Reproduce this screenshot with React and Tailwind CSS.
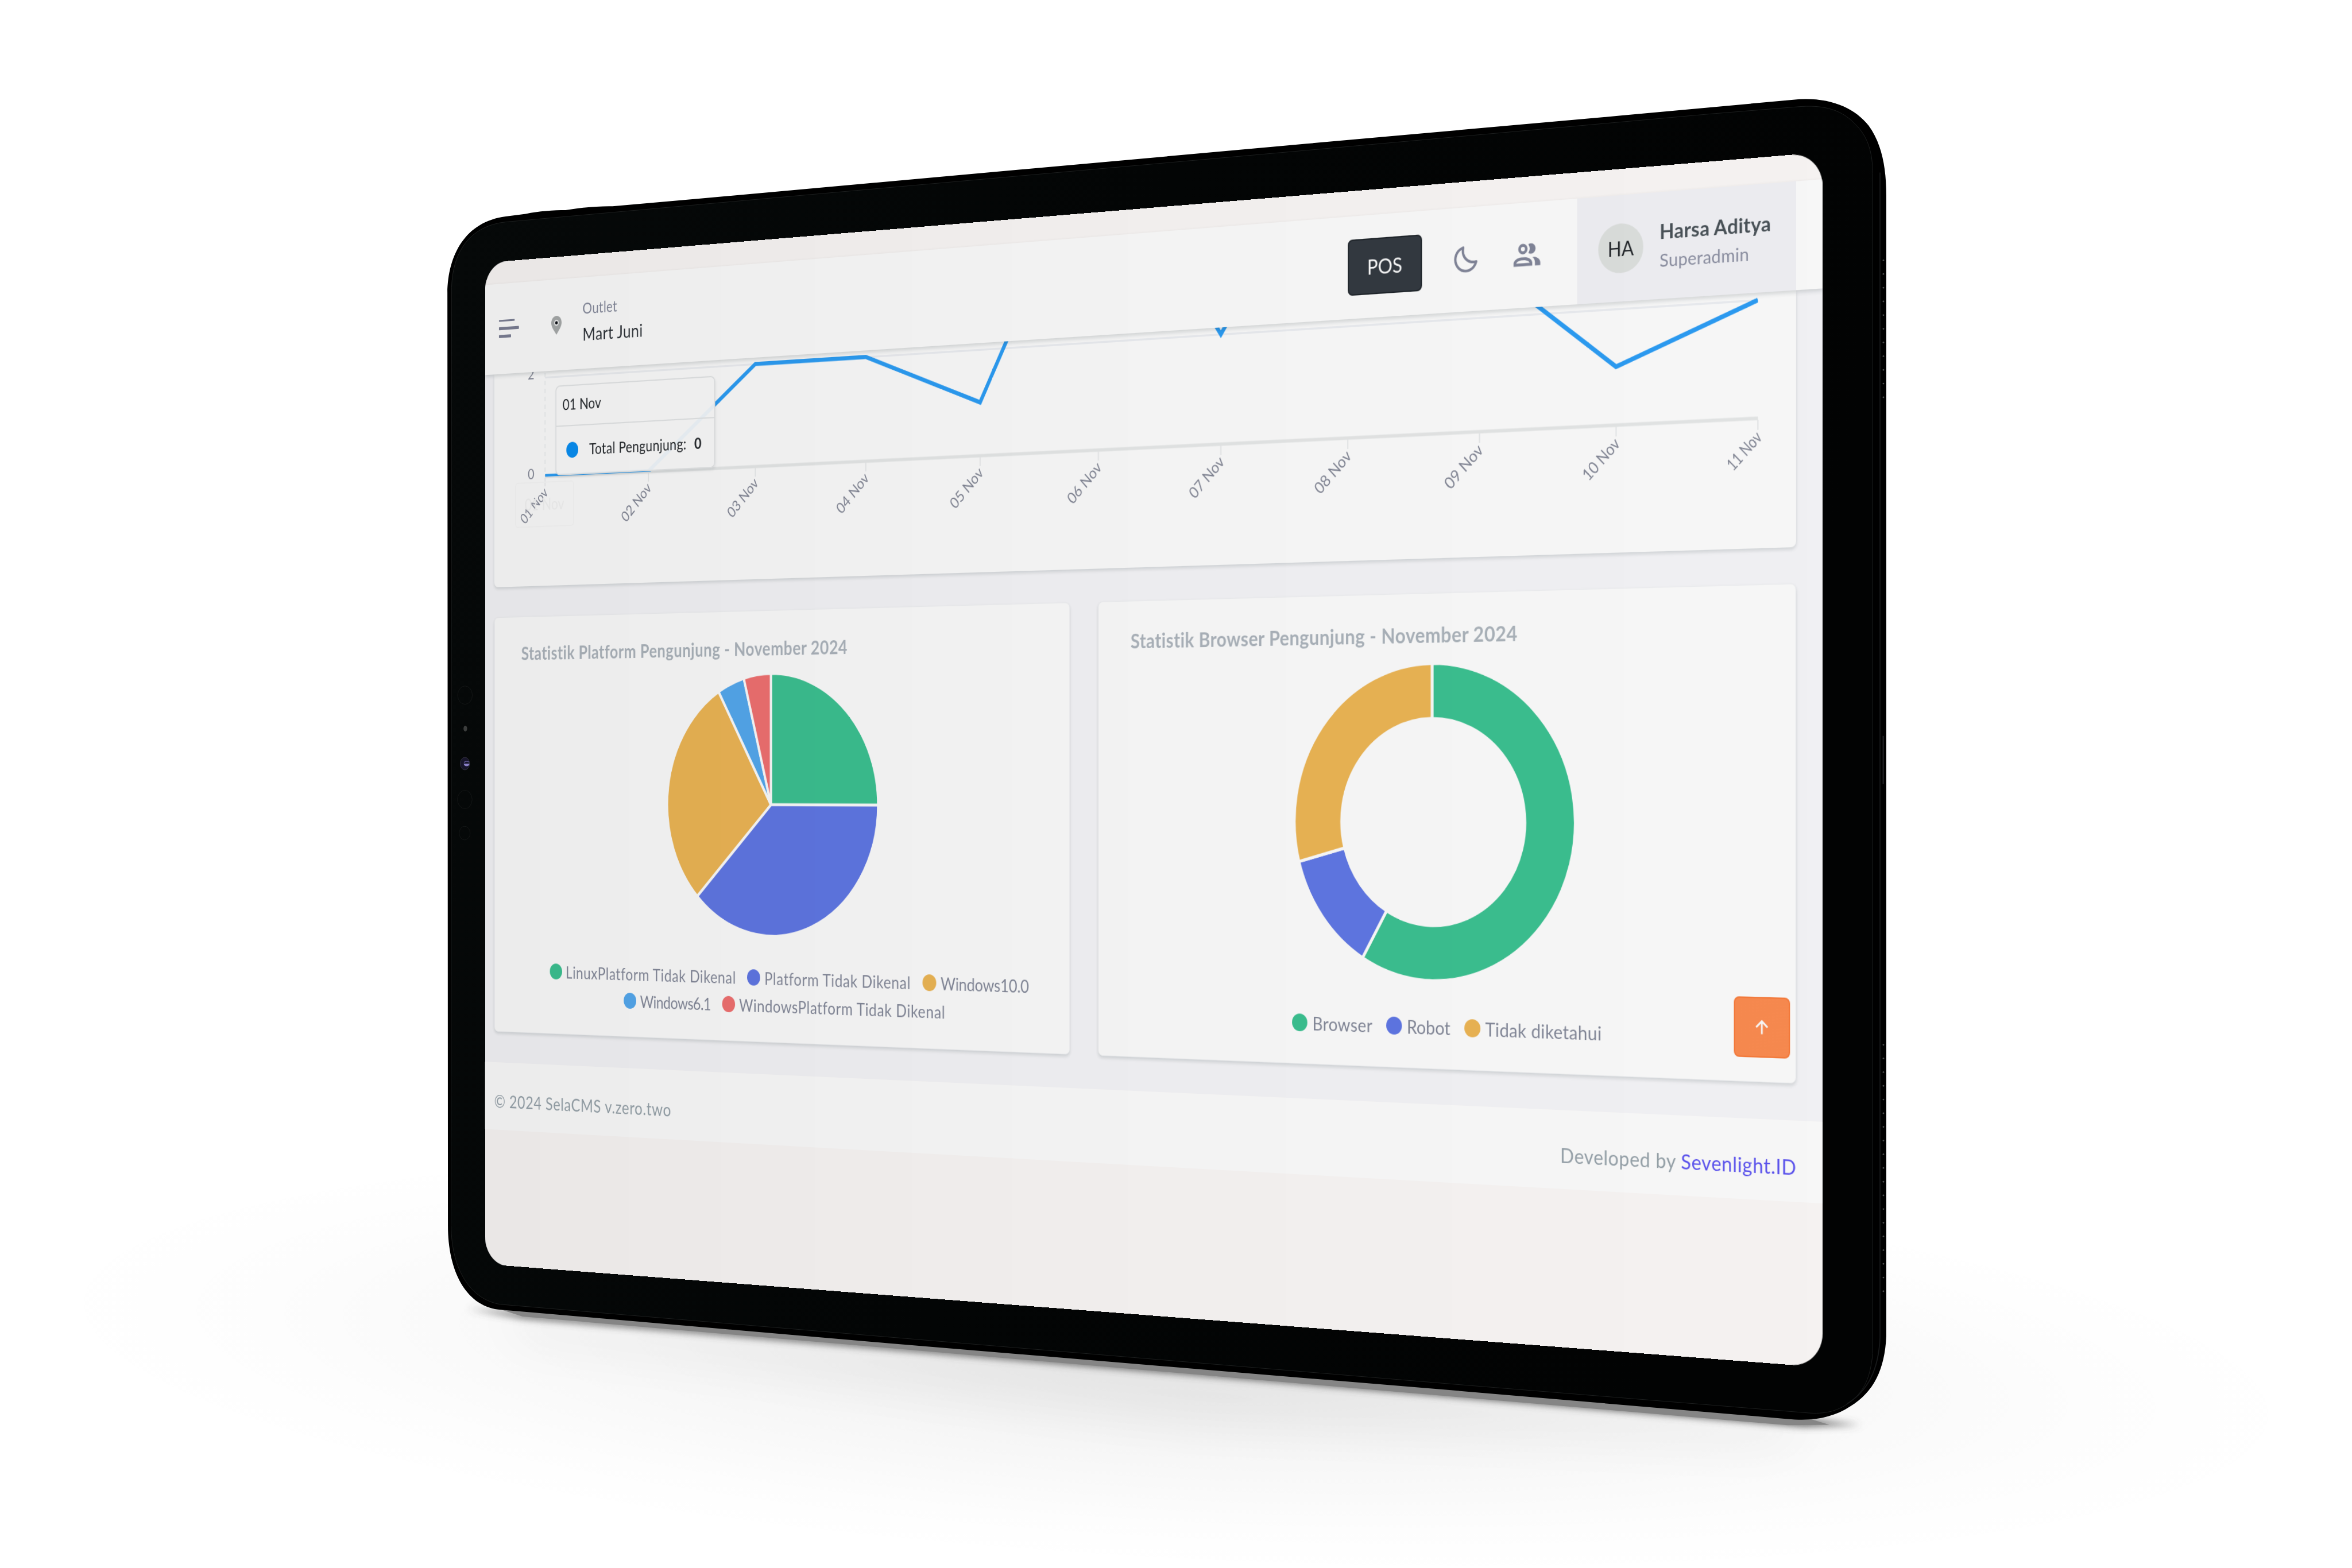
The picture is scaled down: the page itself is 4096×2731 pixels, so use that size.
import React from "react";
import { BiMoon } from "react-icons/bi";

const GREEN = "#3cc493";
const BLUE = "#6179e8";
const AMBER = "#f0b856";
const SKY = "#55abf2";
const RED = "#f47272";

/* ---------- tablet body ---------- */

const BODY =
  "M856 560 C857 488 890 424 967.5 414 L1006 409 C1030 404 1060 402 1082 402 L1095 400 C1120 396 1150 394 1172 394.5 L1337 380 L2500 274.8 L3101 221 L3431 190.6 C3500 184 3548 206 3575 240 C3600 274 3609 320 3609 374 L3609 2557 C3606 2620 3585 2664 3540 2691 C3508 2712 3470 2720 3420 2715 L2800 2662 L1699 2570 L953 2505.5 C890 2497 857 2430 857 2345 Z";

const BEVEL =
  "M864 550 C866 480 900 432 967 424.6 L1462 380 L2500 287.4 L3277 217.4 L3446 203.6 C3500 200 3530 216 3550 238 C3575 262 3583 295 3583 332 L3583 2590 C3578 2640 3565 2665 3535 2686 C3510 2703 3484 2706 3454 2703 L2800 2650 L1840 2570 L957 2495.7 C900 2486 864 2430 863 2345 Z";

const speakerDots = [
  ...Array.from({ length: 11 }, (_, i) => 498 + i * 26.2),
  ...Array.from({ length: 19 }, (_, i) => 1999 + i * 26.2),
];

function TabletBody() {
  return (
    <svg viewBox="0 0 4500 3000" className="absolute inset-0 h-full w-full" aria-hidden="true">
      <defs>
        <linearGradient id="edge" x1="0" x2="1" y1="0" y2="0.2">
          <stop offset="0" stopColor="#060909" />
          <stop offset="0.5" stopColor="#030505" />
          <stop offset="1" stopColor="#020303" />
        </linearGradient>
        <radialGradient id="floor">
          <stop offset="0" stopColor="#000" stopOpacity="0.085" />
          <stop offset="0.45" stopColor="#000" stopOpacity="0.035" />
          <stop offset="0.8" stopColor="#000" stopOpacity="0.008" />
          <stop offset="1" stopColor="#000" stopOpacity="0" />
        </radialGradient>
        <filter id="soft" x="-5%" y="-50%" width="110%" height="200%">
          <feGaussianBlur stdDeviation="7" />
        </filter>
        <filter id="wide" x="-20%" y="-100%" width="140%" height="300%">
          <feGaussianBlur stdDeviation="45" />
        </filter>
      </defs>
      <ellipse cx="2250" cy="2600" rx="2200" ry="400" fill="url(#floor)" transform="rotate(3 2250 2600)" />
      <path d="M950 2500 L3480 2715 L3400 2775 L2300 2730 L1000 2570 Z" fill="#000" opacity="0.035" filter="url(#wide)" />
      <path d="M895 2504 L3460 2716 L3560 2726 L3450 2729 L1000 2522 Z" fill="#555" filter="url(#soft)" />
      <path d="M953 2504 L3460 2714 L3500 2726 L3420 2727 L2800 2674 L1000 2519 Z" fill="#858585" />
      <path d={BODY} fill="#000" />
      <path d={BEVEL} fill="url(#edge)" stroke="#262929" strokeWidth="1" strokeOpacity="0.8" />
      <path d="M3597 330 L3597 2560 C3594 2620 3575 2660 3534 2686" fill="none" stroke="#17191a" strokeWidth="2" />
      {speakerDots.map((y) => (
        <circle key={y} cx="3603.5" cy={y} r="1.6" fill="#4a4c4c" />
      ))}
      <path d="M3603 1408 V1500" stroke="#2b2b2f" strokeWidth="2" />
      <g fill="none" stroke="#151717" strokeWidth="1">
        <ellipse cx="889.7" cy="1330" rx="14" ry="17.5" />
        <ellipse cx="889.3" cy="1529.7" rx="14" ry="17.5" />
        <ellipse cx="889" cy="1594" rx="10.5" ry="13" />
      </g>
      <ellipse cx="890.3" cy="1394" rx="3.5" ry="5.5" fill="#3b3d3c" />
      <ellipse cx="889.5" cy="1461" rx="9" ry="12" fill="#17152a" stroke="#34323f" strokeWidth="1" />
      <path d="M887 1461 H898.5 A6 7 0 0 1 887 1461 Z" fill="#8a80c8" />
      <path d="M888 1459 A6 6 0 0 1 897 1458" fill="none" stroke="#5a528e" strokeWidth="2" />
    </svg>
  );
}

/* ---------- top bar ---------- */

function TopBar() {
  return (
    <header className="relative z-10 flex h-[150px] shrink-0 items-center bg-white pr-[39px] pl-[30px] shadow-[0_3px_6px_rgba(20,40,45,0.16)]">
      <button className="flex w-[43px] flex-col gap-[8.5px]">
        <span className="h-[3.5px] w-[34px] rounded-[1px] bg-[#7d8196]" />
        <span className="h-[5px] w-[43px] rounded-[1px] bg-[#7d8196]" />
        <span className="h-[5px] w-[26px] rounded-[1px] bg-[#7d8196]" />
      </button>
      <svg viewBox="0 0 22 31" className="ml-[69px] h-[31px] w-[22px]">
        <path d="M11 0 C17 0 22 5 22 11.5 C22 18 16 24 11 31 C6 24 0 18 0 11.5 C0 5 5 0 11 0 Z" fill="#a9acac" />
        <circle cx="11" cy="11.5" r="4.8" fill="#fff" />
        <circle cx="11" cy="11.5" r="2.8" fill="#0b0f14" />
      </svg>
      <div className="mt-[-5px] ml-[44px] flex flex-col gap-[15px] whitespace-nowrap">
        <span className="text-[25px] leading-none tracking-[0.3px] text-[#858a9c]">Outlet</span>
        <span className="text-[29px] leading-none tracking-[0.7px] text-[#2b3036]">Mart Juni</span>
      </div>

      <div className="ml-auto flex h-full items-center">
        <button className="flex h-[82px] w-[123px] items-center justify-center rounded-[8px] border-2 border-[#20262c] bg-[#343a42] text-[30px] leading-none text-white">
          POS
        </button>
        <BiMoon className="ml-[48px] h-[46px] w-[46px] text-[#83879b]" />
        <svg viewBox="0 0 24 24" className="ml-[50px] h-[51px] w-[51px]" fill="#83879b">
          <path d="M13.07 10.41A5 5 0 0 0 13.07 4.59A3.39 3.39 0 0 1 15 4A3.5 3.5 0 0 1 15 11A3.39 3.39 0 0 1 13.07 10.41M5.5 7.5A3.5 3.5 0 1 1 9 11A3.5 3.5 0 0 1 5.5 7.5M7.5 7.5A1.5 1.5 0 1 0 9 6A1.5 1.5 0 0 0 7.5 7.5M16 17V19H2V17S2 13 9 13 16 17 16 17M14 17C13.86 16.22 12.67 15 9 15S4.07 16.31 4 17M15.95 13A5.32 5.32 0 0 1 18 17V19H22V17S22 13.37 15.94 13Z" />
        </svg>
        <div className="ml-[54px] flex h-full w-[334px] items-center bg-[#f4f4f8] pl-[33px]">
          <span className="flex h-[70px] w-[70px] shrink-0 items-center justify-center rounded-full bg-[#e0e3e1] text-[28px] leading-none text-[#22262a]">
            HA
          </span>
          <div className="mt-[-2px] ml-[25px] flex flex-col gap-[14px] whitespace-nowrap">
            <span className="text-[29px] leading-none font-bold tracking-[0.3px] text-[#4a5359]">Harsa Aditya</span>
            <span className="text-[25.5px] leading-none tracking-[0.3px] text-[#8b8fa2]">Superadmin</span>
          </div>
        </div>
      </div>
    </header>
  );
}

/* ---------- visitors line chart ---------- */

const X0 = 128.8;
const STEP = 216.33;
const Y0 = 360;
const UNIT = 81.4;
const visitors = [0, 0, 2, 2, 1, 6, 2, 6, 3, 1, 2];
const days = [
  ["01 Nov", 71],
  ["02 Nov", 76],
  ["03 Nov", 76],
  ["04 Nov", 77],
  ["05 Nov", 76],
  ["06 Nov", 76],
  ["07 Nov", 75],
  ["08 Nov", 76],
  ["09 Nov", 77],
  ["10 Nov", 71],
  ["11 Nov", 63],
];

function VisitorsCard() {
  const points = visitors.map((v, i) => `${X0 + i * STEP},${Y0 - v * UNIT}`).join(" ");
  const end = X0 + 10 * STEP;
  return (
    <section className="relative h-[354px] shrink-0 rounded-b-[8px] bg-white shadow-[0_3px_5px_rgba(20,40,45,0.14)]">
      <svg viewBox="20 187 2329 354" className="h-full w-full">
        <defs>
          <clipPath id="plot">
            <rect x={X0} y="150" width={end - X0} height="211" />
          </clipPath>
        </defs>
        <path d={`M${X0} 197.5 H${end}`} stroke="#eff1f5" strokeWidth="3" />
        <path d={`M${X0} 190 V${Y0}`} stroke="#eceff0" strokeWidth="2" strokeDasharray="7 6" />
        <path d={`M${X0} ${Y0 + 1} H${end}`} stroke="#e9ebeb" strokeWidth="5" />
        {days.map(([label, length], i) => (
          <g key={label}>
            <path d={`M${X0 + i * STEP} ${Y0 + 3} v14`} stroke="#ebedee" strokeWidth="2" />
            <text
              x={X0 + i * STEP + 7.5}
              y="389"
              textAnchor="end"
              textLength={length}
              lengthAdjust="spacingAndGlyphs"
              transform={`rotate(-45 ${X0 + i * STEP + 7.5} 389)`}
              fontSize="24"
              fill="#858998"
            >
              {label}
            </text>
          </g>
        ))}
        <polyline points={points} fill="none" stroke="#2c9ff8" strokeWidth="6.5" strokeMiterlimit="10" clipPath="url(#plot)" />
        <text x="106" y="364" textAnchor="end" fontSize="24" fill="#858998">0</text>
        <text x="106" y="199" textAnchor="end" fontSize="24" fill="#858998">2</text>
      </svg>
      <div className="absolute top-[182px] left-[45px] flex h-[75px] w-[125px] items-center justify-center rounded-[6px] border-2 border-[#fbfbfb] text-[26px] text-[#f6f6f6]">
        01 Nov
      </div>
      <div className="absolute top-[25px] left-[131px] flex h-[148px] w-[330px] flex-col rounded-[9px] border-2 border-[#e7e9ea] bg-white/95 whitespace-nowrap text-[#23272b] shadow-[1px_3px_5px_rgba(20,40,45,0.08)]">
        <div className="flex h-[66px] items-center border-b-2 border-[#e7e9ea] pb-[5px] pl-[13px] text-[25px] leading-none">01 Nov</div>
        <div className="flex flex-1 items-center pb-[1px] pl-[21px] text-[25px] leading-none">
          <span className="h-[26px] w-[25px] rounded-full bg-[#0890f6]" />
          <span className="ml-[23px] tracking-[0.35px]">Total Pengunjung:</span>
          <span className="ml-[16px] font-bold">0</span>
        </div>
      </div>
    </section>
  );
}

/* ---------- pie and donut ---------- */

function ringSlice(cx, cy, r, inner, from, to) {
  const at = (radius, part) => {
    const a = (part / 24) * 2 * Math.PI;
    return `${cx + radius * Math.sin(a)} ${cy - radius * Math.cos(a)}`;
  };
  const large = to - from > 12 ? 1 : 0;
  if (!inner) return `M${cx} ${cy} L${at(r, from)} A${r} ${r} 0 ${large} 1 ${at(r, to)} Z`;
  return `M${at(inner, from)} L${at(r, from)} A${r} ${r} 0 ${large} 1 ${at(r, to)} L${at(inner, to)} A${inner} ${inner} 0 ${large} 0 ${at(inner, from)} Z`;
}

function Slices({ cx, cy, r, inner, data }) {
  return data.map(([from, to, color]) => (
    <path key={from} d={ringSlice(cx, cy, r, inner, from, to)} fill={color} stroke="#fff" strokeWidth="4.5" strokeLinejoin="round" />
  ));
}

function LegendItem({ color, children, spacing }) {
  return (
    <li className="flex items-center gap-[8px]">
      <span className={`h-[26px] w-[26px] rounded-full ${color}`} />
      <span className={`text-[27px] leading-none text-[#858a9b] ${spacing}`}>{children}</span>
    </li>
  );
}

function PlatformCard() {
  return (
    <section className="flex flex-col rounded-[8px] border border-[#f3f4f6] bg-white pt-[44px] pb-[36px] shadow-[0_3px_5px_rgba(20,40,45,0.14)]">
      <h2 className="pl-[57px] text-[30px] leading-none font-bold tracking-[0.56px] whitespace-nowrap text-[#aeb6be]">
        Statistik Platform Pengunjung - November 2024
      </h2>
      <svg viewBox="20 686 1139 444" className="mt-[19px] h-[444px] w-full shrink-0">
        <Slices
          cx={592.5}
          cy={902}
          r={209.5}
          data={[
            [0, 6, GREEN],
            [6, 15, BLUE],
            [15, 22, AMBER],
            [22, 23, SKY],
            [23, 24, RED],
          ]}
        />
      </svg>
      <div className="mt-auto flex flex-col items-center pl-[44px] whitespace-nowrap">
        <ul className="flex h-[44px] items-center gap-[22.5px]">
          <LegendItem color="bg-[#3cc493]" spacing="tracking-[0.68px]">LinuxPlatform Tidak Dikenal</LegendItem>
          <LegendItem color="bg-[#6179e8]" spacing="tracking-[0.73px]">Platform Tidak Dikenal</LegendItem>
          <LegendItem color="bg-[#f0b856]" spacing="tracking-[-0.15px]">Windows10.0</LegendItem>
        </ul>
        <ul className="flex h-[44px] items-center gap-[22.5px]">
          <LegendItem color="bg-[#55abf2]" spacing="tracking-[-0.55px]">Windows6.1</LegendItem>
          <LegendItem color="bg-[#f47272]" spacing="tracking-[0.69px]">WindowsPlatform Tidak Dikenal</LegendItem>
        </ul>
      </div>
    </section>
  );
}

function BrowserCard() {
  return (
    <section className="flex flex-col rounded-[8px] border border-[#f3f4f6] bg-white pt-[44px] pb-[38px] shadow-[0_3px_5px_rgba(20,40,45,0.14)]">
      <h2 className="pl-[57px] text-[30px] leading-none font-bold tracking-[0.42px] whitespace-nowrap text-[#aeb6be]">
        Statistik Browser Pengunjung - November 2024
      </h2>
      <svg viewBox="1210 686 1139 475" className="mt-[19px] h-[475px] w-full shrink-0">
        <Slices
          cx={1782.5}
          cy={923.5}
          r={230}
          inner={150}
          data={[
            [0, 14, GREEN],
            [14, 17, BLUE],
            [17, 24, AMBER],
          ]}
        />
      </svg>
      <ul className="mt-auto flex h-[44px] items-center justify-center gap-[22.5px] pl-[44px] whitespace-nowrap">
        <LegendItem color="bg-[#3cc493]" spacing="tracking-[0.36px]">Browser</LegendItem>
        <LegendItem color="bg-[#6179e8]" spacing="tracking-normal">Robot</LegendItem>
        <LegendItem color="bg-[#f0b856]" spacing="tracking-[0.33px]">Tidak diketahui</LegendItem>
      </ul>
    </section>
  );
}

/* ---------- page ---------- */

function Screen() {
  return (
    <div className="absolute top-0 left-0 flex h-[1668px] w-[2388px] origin-top-left [transform:matrix3d(0.741423,-0.100239,0,-0.0000737186,0,1.045446,0,0,0,0,1,0,844.686,457.842,0,1)] flex-col overflow-hidden rounded-[46px] bg-[#fdfaf9] font-['Lato',sans-serif]">
      <div className="h-[37px] shrink-0" />
      <TopBar />
      <main className="flex h-[1144px] shrink-0 flex-col bg-[#f8f8fb] pr-[39px] pl-[20px]">
        <VisitorsCard />
        <div className="mt-[50px] grid h-[689px] grid-cols-[1139px_1139px] gap-[51px]">
          <PlatformCard />
          <BrowserCard />
        </div>
      </main>
      <footer className="flex h-[112px] shrink-0 items-center justify-between bg-white pt-[17px] pr-[39px] pl-[20px] text-[28.5px] leading-none whitespace-nowrap text-[#98a4ac]">
        <span className="tracking-[0.78px]">© 2024 SelaCMS v.zero.two</span>
        <span className="mr-[-0.6px] tracking-[0.6px]">
          Developed by <a className="text-[#5d54f4]">Sevenlight.ID</a>
        </span>
      </footer>
      <button className="absolute top-[1162px] right-[48px] flex h-[84px] w-[84px] items-center justify-center rounded-[8px] border-2 border-[#fb7d3c] bg-[#fe8d51]">
        <svg viewBox="0 0 20 20" className="h-[20px] w-[20px]" fill="none" stroke="#fff" strokeWidth="2.6">
          <path d="M10 19.5 V1.5 M1.5 10 L10 1.5 L18.5 10" />
        </svg>
      </button>
      <div className="pointer-events-none absolute inset-0 z-20 bg-linear-to-r from-black/[0.075] via-black/[0.05] to-black/[0.033]" />
    </div>
  );
}

export default function App() {
  return (
    <div className="relative h-[2731px] w-[4096px] overflow-hidden bg-white">
      <TabletBody />
      <Screen />
    </div>
  );
}
